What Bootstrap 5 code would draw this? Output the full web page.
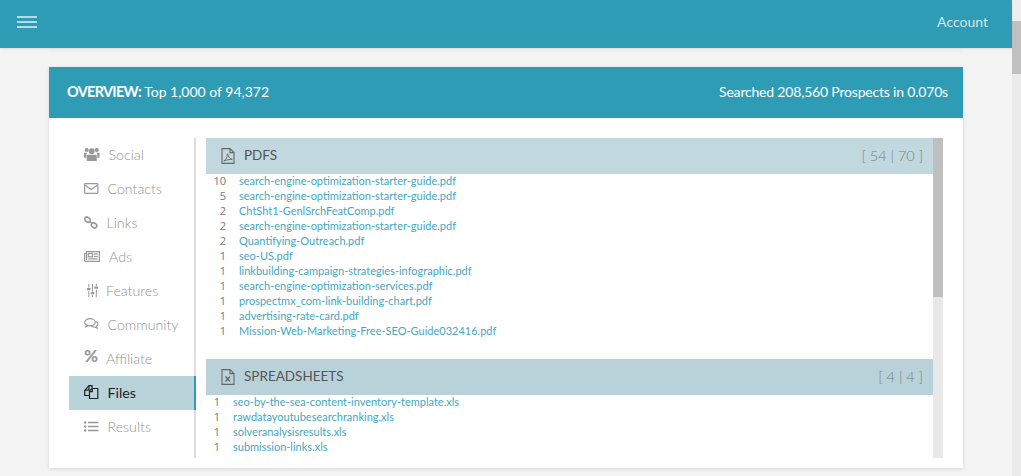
<!DOCTYPE html>
<html lang="en">
<head>
<meta charset="utf-8">
<title>Overview</title>
<link rel="stylesheet" href="https://cdn.jsdelivr.net/npm/bootstrap@5.3.0/dist/css/bootstrap.min.css">
<style>
html,body{height:476px;overflow:hidden;}
body{background:#f4f4f4;font-family:"Lato","Liberation Sans",sans-serif;font-weight:300;color:#666;}
.shell{height:476px;}
.pagecol{width:1012px;height:476px;}
.pagebar{width:9px;background:#ebebeb;}
.pagebar-top{height:21px;background:#eee;}
.pagebar-thumb{height:53px;background:#c0c0c0;}
.topbar{height:48px;background:#2f9cb6;box-shadow:0 1px 2px rgba(0,0,0,.1);padding:0 24px 4px 17px;position:relative;z-index:2;}
.burger{width:20px;height:12px;display:block;}
.acct{font-size:14px;color:#cfe6eb;font-weight:400;margin-bottom:1px;}
.under{height:3px;margin:0 49px;background:#f2f2f2;box-shadow:0 1px 2px rgba(0,0,0,.03);}
.panel{margin:16px 49px 0;height:401px;background:#fff;box-shadow:0 1px 4px rgba(0,0,0,.13);}
.panel-head{height:51px;background:#2f9cb6;color:#fff;padding:0 15px 2px 18px;font-size:14px;font-weight:400;}
.panel-head b{font-weight:700;letter-spacing:-.7px;font-size:14.5px;}
.panel-head .stat{letter-spacing:-.19px;}
.panel-body{padding:20px 20px 10px;height:350px;}
.side{width:127px;border-right:2px solid #ddd;height:320px;list-style:none;margin:0;padding:0;}
.side li{height:34px;margin-right:-2px;padding:0 0 1px 15px;font-size:14.2px;color:#939393;gap:9px;}
.side li svg{fill:#999;stroke:none;flex:none;margin-top:-1px;}
.side li svg.ol{fill:none;stroke:#999;stroke-width:1.2;}
.side li svg.shift{margin-left:3px;margin-right:-1px;}
.side li.on{background:#b8d3da;border-right:2px solid #2f9cb6;color:#222;font-weight:400;}
.side li.on svg.ol{stroke:#222;}
.pct{font-size:17px;font-weight:900;color:#999;width:13px;line-height:1;margin-top:-6px;}
.mainbox{margin-left:10px;width:737px;height:320px;overflow:hidden;}
.lists{width:727px;height:320px;overflow:hidden;}
.vbar{width:10px;background:#e8e8e8;}
.vthumb{height:159px;background:#bfbfbf;}
.sect-head{height:36px;padding:0 10px 1px 15px;font-size:13.5px;color:#555;font-weight:400;background:#c0d8de;gap:9px;}
.sect-head.alt{background:#b9d2d9;}
.sect-head svg{fill:none;stroke:#666;stroke-width:1.1;flex:none;}
.cnt{font-size:14.5px;color:#778083;font-weight:300;}
.files{padding:0;margin:0 0 20px;list-style:none;}
.files li{height:15px;line-height:14px;font-size:11px;display:flex;font-weight:400;}
.n{text-align:right;color:#777;flex:none;width:20px;margin-right:13px;font-family:"Open Sans","Liberation Sans",sans-serif;font-weight:400;opacity:.99;}
.files.tight .n{width:14px;}
.files a{color:#45a7be;text-decoration:none;}
</style>
</head>
<body>
<div class="shell d-flex">
  <div class="pagecol">
    <header class="topbar d-flex align-items-center justify-content-between">
      <svg class="burger" viewBox="0 0 20 12"><path d="M0 1h20M0 6h20M0 11h20" stroke="#e2eff3" stroke-width="1.4"/></svg>
      <span class="acct">Account</span>
    </header>
    <div class="under"></div>
    <section class="panel">
      <div class="panel-head d-flex align-items-center justify-content-between">
        <span><b>OVERVIEW:</b> Top 1,000 of 94,372</span>
        <span class="stat">Searched 208,560 Prospects in 0.070s</span>
      </div>
      <div class="panel-body d-flex">
        <ul class="side">
          <li class="d-flex align-items-center"><svg width="15.500" height="15" viewBox="0 0 15.500 15"><circle cx="7.750" cy="4.200" r="2.900"/><circle cx="2.700" cy="3" r="2.100"/><circle cx="12.800" cy="3" r="2.100"/><path d="M4.200 7.800h7.100c1 0 1.500.8 1.500 1.700V14H2.700V9.500c0-.9.500-1.700 1.500-1.700zM.3 5.800h3c-.6.6-1 1.300-1 2.200v2.800H0V6.100zM12.200 5.800h3l.3.3v4.700h-2.300V8c0-.9-.4-1.600-1-2.200z"/></svg>Social</li>
          <li class="d-flex align-items-center"><svg class="ol" width="14.500" height="11" viewBox="0 0 14.500 11"><rect x=".6" y=".6" width="13.300" height="9.800" rx=".8"/><path d="M.8 2l6.400 4.600L13.700 2"/></svg>Contacts</li>
          <li class="d-flex align-items-center"><svg class="ol" width="13.500" height="13" viewBox="0 0 13.500 13" style="stroke-width:1.600"><rect x=".6" y="1.500" width="5.600" height="4.200" rx="2" transform="rotate(38 3.400 3.600)"/><rect x="7.300" y="7.300" width="5.600" height="4.200" rx="2" transform="rotate(38 10.100 9.400)"/><path d="M5.500 5.300l2.500 2"/></svg>Links</li>
          <li class="d-flex align-items-center"><svg class="ol" width="16" height="11" viewBox="0 0 16 11"><path d="M2.500.6h12.900v9.800H1.500c-.5 0-.9-.4-.9-.9V2.500h1.900zM2.500 2.500v6.600"/><rect x="4.300" y="2.400" width="4.200" height="3.400"/><path d="M9.800 2.800h4M9.800 5.300h4M4.300 7.900h9.500"/></svg>Ads</li>
          <li class="d-flex align-items-center"><svg class="shift" width="11" height="13" viewBox="0 0 11 13"><path d="M1.300 0h1v3.500h-1zM1.300 7h1v6h-1zM5 0h1v7.500H5zM5 11h1v2H5zM8.800 0h1v2h-1zM8.800 5.500h1V13h-1z"/><rect y="4" width="3.600" height="2.200" rx=".5"/><rect x="3.700" y="8" width="3.600" height="2.200" rx=".5"/><rect x="7.400" y="2.500" width="3.600" height="2.200" rx=".5"/></svg>Features</li>
          <li class="d-flex align-items-center"><svg class="ol" width="14.500" height="12" viewBox="0 0 14.500 12"><ellipse cx="6" cy="4.300" rx="5.300" ry="3.600"/><path d="M2.500 7l-.8 1.800 2.600-1M12 3.500c1.500.8 2.200 2 1.700 3.300-.3.700-.8 1.200-1.400 1.500l.7 1.900-3-1.400c-1 .1-2-.1-2.800-.5"/></svg>Community</li>
          <li class="d-flex align-items-center"><span class="pct">%</span>Affiliate</li>
          <li class="d-flex align-items-center on"><svg class="ol" width="14.500" height="14" viewBox="0 0 14.500 14"><path d="M5.500 10.500H.7V5.600L5 .7h3v3M5.500 5.500v8h8.300v-10H8.500z"/><path d="M5 .9v4.200H1M8.300 3.700v3H5.600"/></svg>Files</li>
          <li class="d-flex align-items-center"><svg width="14.500" height="11" viewBox="0 0 14.500 11"><circle cx="1.200" cy="1.500" r="1.200"/><circle cx="1.200" cy="5.500" r="1.200"/><circle cx="1.200" cy="9.500" r="1.200"/><path d="M4 .7h10.500v1.600H4zM4 4.700h10.500v1.600H4zM4 8.700h10.500v1.600H4z"/></svg>Results</li>
        </ul>
        <div class="mainbox d-flex">
          <div class="lists">
            <div class="sect-head d-flex align-items-center">
              <svg width="14" height="16" viewBox="0 0 14 16"><path d="M1 .6h8l4 4v10.800H1zM9 .6v4h4"/><path d="M2.800 13c2-1 3.500-4 3.500-6.500 0-1 .8-1 .8 0 0 2.500 2 4.500 4.200 4.800-2.500 0-6 .7-8.500 1.700z" stroke-width=".9"/></svg>
              <span>PDFS</span><span class="cnt ms-auto">[ 54 | 70 ]</span>
            </div>
            <ul class="files">
              <li><span class="n">10</span><a href="#">search-engine-optimization-starter-guide.pdf</a></li>
              <li><span class="n">5</span><a href="#">search-engine-optimization-starter-guide.pdf</a></li>
              <li><span class="n">2</span><a href="#">ChtSht1-GenlSrchFeatComp.pdf</a></li>
              <li><span class="n">2</span><a href="#">search-engine-optimization-starter-guide.pdf</a></li>
              <li><span class="n">2</span><a href="#">Quantifying-Outreach.pdf</a></li>
              <li><span class="n">1</span><a href="#">seo-US.pdf</a></li>
              <li><span class="n">1</span><a href="#">linkbuilding-campaign-strategies-infographic.pdf</a></li>
              <li><span class="n">1</span><a href="#">search-engine-optimization-services.pdf</a></li>
              <li><span class="n">1</span><a href="#">prospectmx_com-link-building-chart.pdf</a></li>
              <li><span class="n">1</span><a href="#">advertising-rate-card.pdf</a></li>
              <li><span class="n">1</span><a href="#">Mission-Web-Marketing-Free-SEO-Guide032416.pdf</a></li>
            </ul>
            <div class="sect-head alt d-flex align-items-center">
              <svg width="14" height="16" viewBox="0 0 14 16"><path d="M1 .6h8l4 4v10.800H1zM9 .6v4h4"/><path d="M4.500 7.500l4.500 5M9 7.500l-4.500 5" stroke-width="1.300"/></svg>
              <span>SPREADSHEETS</span><span class="cnt ms-auto">[ 4 | 4 ]</span>
            </div>
            <ul class="files tight">
              <li><span class="n">1</span><a href="#">seo-by-the-sea-content-inventory-template.xls</a></li>
              <li><span class="n">1</span><a href="#">rawdatayoutubesearchranking.xls</a></li>
              <li><span class="n">1</span><a href="#">solveranalysisresults.xls</a></li>
              <li><span class="n">1</span><a href="#">submission-links.xls</a></li>
            </ul>
          </div>
          <div class="vbar"><div class="vthumb"></div></div>
        </div>
      </div>
    </section>
  </div>
  <div class="pagebar"><div class="pagebar-top"></div><div class="pagebar-thumb"></div></div>
</div>
<script src="https://cdn.jsdelivr.net/npm/bootstrap@5.3.0/dist/js/bootstrap.bundle.min.js"></script>
</body>
</html>
